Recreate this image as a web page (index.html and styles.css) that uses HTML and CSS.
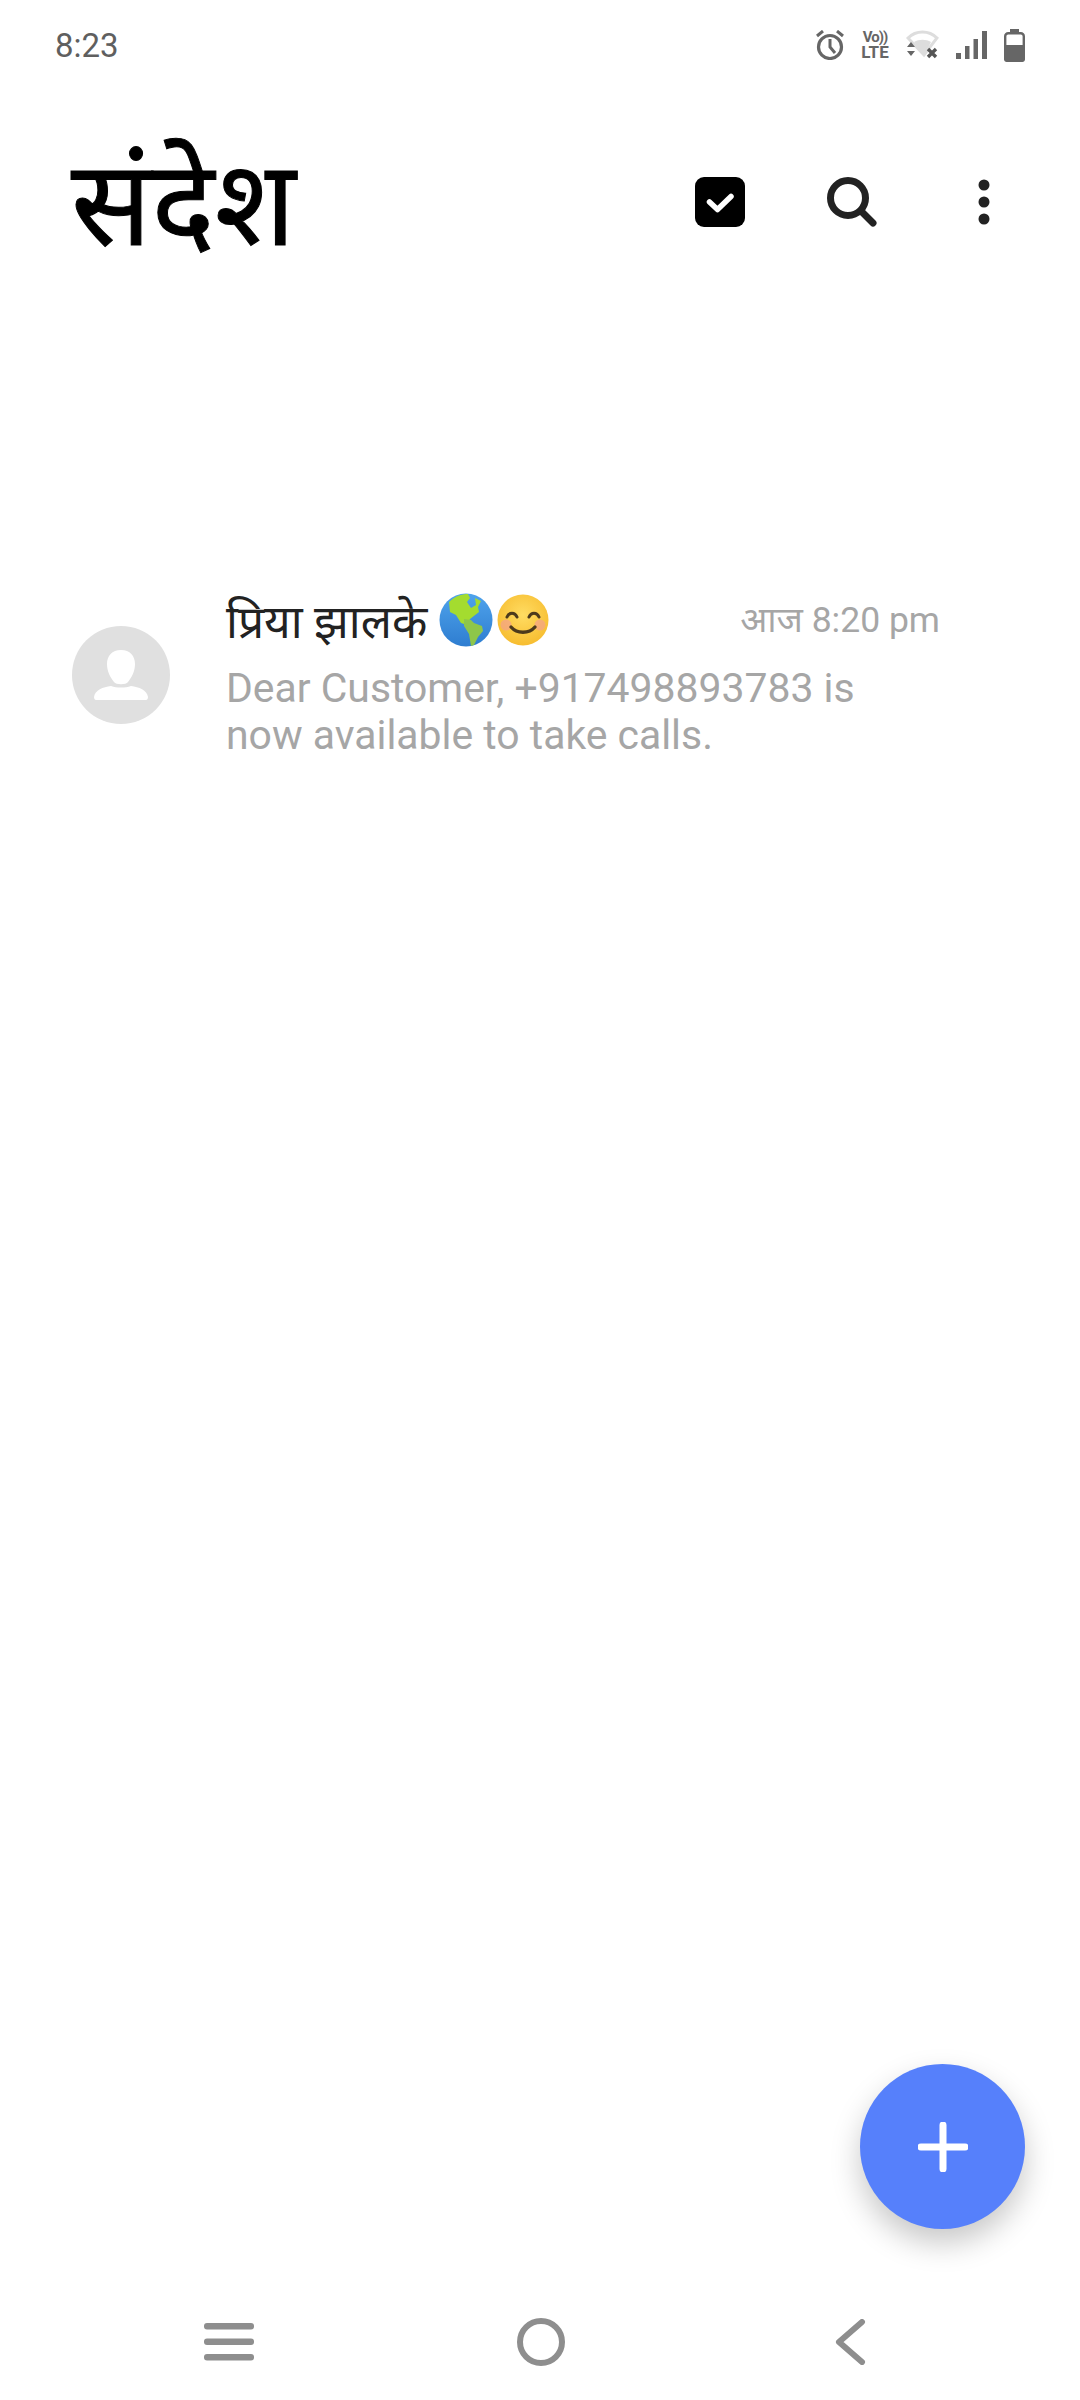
FILE: index.html
```html
<!DOCTYPE html>
<html lang="hi">
<head>
	<meta charset="utf-8">
	<title>संदेश</title>
	<link rel="stylesheet" href="styles.css">
</head>
<body>
	<div class="screen">
		<div class="status-bar">
			<span class="clock">8:23</span>
			<div class="status-icons">
				<svg width="28" height="30" viewBox="0 0 28 30" fill="none" stroke="#666" stroke-width="3.2"><circle cx="14" cy="17" r="11.500"/><path d="M14 9v8l5 6" stroke-width="3"/><path d="M1 6l6-5M27 6l-6-5" stroke-width="3"/></svg>
				<div class="volte"><span class="vo">Vo))</span><span class="lte">LTE</span></div>
				<svg width="33" height="30" viewBox="0 0 33 30"><path d="M2 8C10 0 23 0 31 8L18 25Z" fill="none" stroke="#ddd" stroke-width="3"/><path d="M8 12c5-3 12-3 17 0l-7 14Z" fill="#ddd"/><path d="M1 17l4-5 4 5ZM1 21l4 5 4-5Z" fill="#666"/><path d="M22 19l8 8M30 19l-8 8" stroke="#555" stroke-width="3.400"/></svg>
				<svg width="31" height="28" viewBox="0 0 31 28" fill="#666"><rect x="0" y="22" width="5" height="6"/><rect x="9" y="15" width="4.500" height="13"/><rect x="17.500" y="8" width="4.500" height="20"/><rect x="26" y="0" width="5" height="28"/></svg>
				<svg width="21" height="33" viewBox="0 0 21 33"><path d="M6 0h9v3H6z" fill="#666"/><rect x="1.200" y="4.200" width="18.600" height="27.600" rx="3" fill="#fff" stroke="#666" stroke-width="2.400"/><path d="M0 16h21v14a3 3 0 0 1-3 3H3a3 3 0 0 1-3-3Z" fill="#666"/></svg>
			</div>
		</div>

		<header class="top-bar">
			<h1 class="page-title">संदेश</h1>
			<div class="actions">
				<svg class="act-check" width="50" height="50" viewBox="0 0 50 50"><rect width="50" height="50" rx="9" fill="#000"/><path d="M14.500 25l8 7.500 13.500-13" fill="none" stroke="#fff" stroke-width="5.500" stroke-linecap="round" stroke-linejoin="round"/></svg>
				<svg class="act-search" width="50" height="50" viewBox="0 0 50 50" fill="none" stroke="#222"><circle cx="21" cy="21" r="17.500" stroke-width="7"/><path d="M34 34l12 12" stroke-width="7" stroke-linecap="round"/></svg>
				<svg class="act-more" width="12" height="46" viewBox="0 0 12 46" fill="#222"><circle cx="6" cy="6" r="5.500"/><circle cx="6" cy="23" r="5.500"/><circle cx="6" cy="40" r="5.500"/></svg>
			</div>
		</header>

		<main class="threads">
			<div class="thread">
				<div class="avatar">
					<svg width="56" height="50" viewBox="0 0 56 50" fill="#fff"><path d="M28 0c-9 0-14 6-14 14 0 7 3 13 7 18 2 3 12 3 14 0 4-5 7-11 7-18C42 6 37 0 28 0Z"/><path d="M1 47c1-7 9-10 17-11 6 2 14 2 20 0 8 1 16 4 17 11 0 2-1 3-2 3H3c-1 0-2-1-2-3Z"/></svg>
				</div>
				<div class="thread-body">
					<div class="thread-head">
						<div class="name">
							<span>प्रिया झालके</span>
							<svg class="emoji" width="54" height="54" viewBox="0 0 54 54"><defs><linearGradient id="sea" x1="0" y1="0" x2="0" y2="1"><stop offset="0" stop-color="#4fa3ec"/><stop offset="1" stop-color="#2e7dd0"/></linearGradient></defs><circle cx="27" cy="27" r="26.500" fill="url(#sea)"/><path d="M10 9c6-6 13-8 19-8l2 4-3 4 4 6 5-3-1-7 6 3-3 6 1 5-9 7-3 6-6-2-5-8-6-3Z" fill="#a4dc2f"/><path d="M25 26l7 1 3 3 8 3 1 5-5 6-4 8-3 1-2-12-5-8Z" fill="#8ec64a"/></svg>
							<svg class="emoji" width="52" height="52" viewBox="0 0 52 52"><defs><radialGradient id="face" cx="50%" cy="40%" r="60%"><stop offset="0" stop-color="#ffdc62"/><stop offset="1" stop-color="#f7bd30"/></radialGradient></defs><circle cx="26" cy="26" r="25.500" fill="url(#face)"/><circle cx="9" cy="31" r="5.500" fill="#f4a18c" opacity=".7"/><circle cx="43" cy="31" r="5.500" fill="#f4a18c" opacity=".7"/><path d="M10 23c2-5 8-5 10 0M32 23c2-5 8-5 10 0" fill="none" stroke="#4d3a1c" stroke-width="3" stroke-linecap="round"/><path d="M14 33c6 7 18 7 24 0" fill="none" stroke="#4d3a1c" stroke-width="3.400" stroke-linecap="round"/></svg>
						</div>
						<span class="time">आज 8:20 pm</span>
					</div>
					<p class="snippet">Dear Customer, +917498893783 is<br>now available to take calls.</p>
				</div>
			</div>
		</main>

		<button class="fab"><svg width="50" height="50" viewBox="0 0 50 50"><path d="M25 3v44M3 25h44" stroke="#fff" stroke-width="7" stroke-linecap="round"/></svg></button>

		<nav class="nav-bar">
			<svg width="50" height="38" viewBox="0 0 50 38" fill="#8e8e8e"><rect y="0" width="50" height="6.500" rx="3"/><rect y="15.500" width="50" height="6.500" rx="3"/><rect y="31" width="50" height="6.500" rx="3"/></svg>
			<svg width="48" height="48" viewBox="0 0 48 48" fill="none" stroke="#8e8e8e" stroke-width="6"><circle cx="24" cy="24" r="21"/></svg>
			<svg class="nav-back" width="31" height="46" viewBox="0 0 31 46" fill="none" stroke="#8e8e8e" stroke-width="6" stroke-linecap="round" stroke-linejoin="round"><path d="M27 3L4 23l23 20"/></svg>
		</nav>
	</div>
</body>
</html>
```

FILE: styles.css
```css
* { box-sizing: border-box; }
html, body { margin: 0; padding: 0; }
body { background: #fff; font-family: Roboto, "Noto Sans", sans-serif; }

.screen {
	position: relative;
	width: 1080px;
	height: 2400px;
	display: flex;
	flex-direction: column;
	background: #fff;
	overflow: hidden;
}

.status-bar {
	height: 90px;
	padding: 0 55px;
	display: flex;
	justify-content: space-between;
	align-items: center;
}
.clock { font-size: 33px; font-weight: 400; color: #5f5f5f; }
.status-icons { display: flex; align-items: center; gap: 17px; }
.volte { width: 28px; display: flex; flex-direction: column; align-items: center; color: #666; font-weight: 700; line-height: 15px; }
.vo { font-size: 15px; letter-spacing: -1px; }
.lte { font-size: 17px; }

.top-bar {
	height: 130px;
	margin-top: 47px;
	padding: 0 90px 0 71px;
	display: flex;
	justify-content: space-between;
	align-items: center;
}
.page-title {
	margin: 6px 0 0;
	font-size: 119px;
	font-weight: 400;
	line-height: 130px;
	color: #000;
	-webkit-text-stroke: 1px #000;
}
.actions { display: flex; align-items: center; }
.act-check { margin-right: 82px; }
.act-search { margin-right: 101px; }

.threads { flex: 1; padding-top: 323px; }
.thread { display: flex; align-items: center; padding: 0 140px 0 72px; }
.avatar {
	width: 98px;
	height: 98px;
	flex: none;
	border-radius: 50%;
	background: #e0e0e0;
	display: flex;
	align-items: center;
	justify-content: center;
}
.thread-body { flex: 1; margin-left: 56px; }
.thread-head { display: flex; justify-content: space-between; align-items: center; height: 60px; }
.name { display: flex; align-items: center; gap: 4px; font-size: 46px; color: #222; }
.name span { margin-right: 8px; }
.time { margin-bottom: 4px; font-size: 35.500px; color: #a6a6a6; }
.snippet { margin: 15px 0 0; font-size: 40.900px; line-height: 47px; color: #a6a6a6; }

.fab {
	position: absolute;
	left: 860px;
	top: 2064px;
	width: 165px;
	height: 165px;
	border: 0;
	padding: 0;
	border-radius: 50%;
	background: #5680fb;
	box-shadow: 0 14px 30px rgba(0, 0, 0, .22);
	display: flex;
	align-items: center;
	justify-content: center;
}

.nav-bar {
	height: 120px;
	padding: 4px 0 0 204px;
	display: flex;
	gap: 263px;
	align-items: center;
}
.nav-back { margin-left: 7px; }
```
